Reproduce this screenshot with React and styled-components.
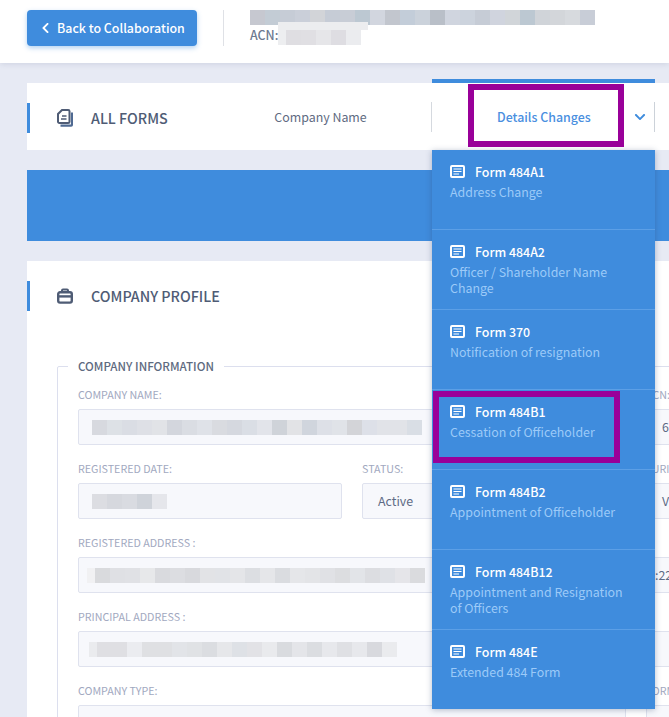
import React from 'react'
import styled, { createGlobalStyle } from 'styled-components'
import { FaChevronLeft, FaChevronDown } from 'react-icons/fa'

const GlobalStyle = createGlobalStyle`
  html, body { margin: 0; padding: 0; }
  body {
    background: #e7eaf4;
    font-family: "Noto Sans CJK SC", "Noto Sans", sans-serif;
  }
`

const blue = '#3f8cdd'

const Page = styled.div`
  width: 669px;
  height: 717px;
  overflow: hidden;
  background: #e7eaf4;
`
const Header = styled.header`
  height: 63px;
  background: #fff;
  box-shadow: 0 1px 6px rgba(90, 100, 140, 0.18);
  display: flex;
  align-items: flex-start;
  padding: 10px 0 0 27px;
  box-sizing: border-box;
  position: relative;
`
const BackButton = styled.button`
  width: 170px;
  height: 36px;
  border: 0;
  border-radius: 4px;
  background: ${blue};
  color: #fff;
  font: 500 12.4px/36px "Noto Sans CJK SC", sans-serif;
  white-space: nowrap;
  display: flex;
  align-items: center;
  gap: 7px;
  padding: 0 0 0 14px;
  box-shadow: 0 2px 5px rgba(63, 140, 221, 0.4);
  svg { width: 9px; height: 12px; flex: none; }
`
const HeaderDivider = styled.div`
  width: 1px;
  height: 36px;
  background: #dfe1e6;
  margin: 0 26px;
`
const CompanyBlock = styled.div`
  display: flex;
  flex-direction: column;
  gap: 1px;
`
const AcnRow = styled.div`
  display: flex;
  align-items: center;
  position: relative;
  height: 18px;
  font: 500 12.4px/18px "Noto Sans CJK SC", sans-serif;
  color: #6d7a90;
`
const AcnBlur = styled.div`
  position: absolute;
  left: 28px;
  top: -4px;
  width: 90px;
`
const Strip = styled.div`
  height: 8px;
  background: #ecedef;
`
const Mosaic = styled.div`
  display: flex;
  height: ${(p) => p.$height || 15}px;
`
const Cell = styled.div`
  width: ${(p) => p.$width || 15}px;
  flex: none;
  background: ${(p) => p.$color};
`

const Main = styled.main`
  padding: 20px 0 0 27px;
  display: flex;
  flex-direction: column;
  gap: 20px;
`
const TabsCard = styled.section`
  height: 67px;
  background: #fff;
  display: flex;
  align-items: center;
`
const SectionTitle = styled.h2`
  margin: 0;
  height: 30px;
  border-left: 3px solid ${blue};
  padding-left: 27px;
  display: flex;
  align-items: center;
  gap: 18px;
  font: 500 14.3px/30px "Noto Sans CJK SC", sans-serif;
  color: #4f5c75;
  flex: none;
  box-sizing: border-box;
  svg { width: 16px; height: 18px; flex: none; }
`
const TabsTitle = styled(SectionTitle)`
  width: 210px;
  align-self: flex-start;
  margin-top: 20px;
`
const CompanyTab = styled.div`
  width: 167px;
  height: 30px;
  padding-right: 27px;
  border-right: 1px solid #d5d9df;
  font: 400 12.4px/30px "Noto Sans CJK SC", sans-serif;
  color: #5f6b82;
  text-align: center;
  flex: none;
`
const DetailsTab = styled.div`
  position: relative;
  width: 223px;
  height: 67px;
  flex: none;
  display: flex;
  align-items: center;
  font: 500 12.4px/30px "Noto Sans CJK SC", sans-serif;
  color: #4a8fdf;
  padding-left: 65px;
  box-sizing: border-box;
  &::before {
    content: '';
    position: absolute;
    left: 0;
    right: 0;
    top: -4px;
    height: 4px;
    background: ${blue};
  }
  &::after {
    content: '';
    position: absolute;
    right: 0;
    top: 19px;
    height: 30px;
    width: 1px;
    background: #ccd2d9;
  }
`
const Chevron = styled.span`
  position: absolute;
  left: 202px;
  top: 28px;
  color: ${blue};
  display: flex;
  svg { width: 12px; height: 12px; }
`
const Dropdown = styled.div`
  position: absolute;
  left: 0;
  top: 67px;
  width: 223px;
  z-index: 5;
  background: ${blue};
  box-shadow: 0 1px 6px rgba(50, 70, 110, 0.35);
`
const DropItem = styled.div`
  height: 80px;
  box-sizing: border-box;
  padding: 14px 26px 0 18px;
  border-bottom: 1px solid #5c9fe6;
  &:last-child { border-bottom: 0; height: 79px; }
`
const ItemHead = styled.div`
  display: flex;
  align-items: center;
  gap: 10px;
  height: 16px;
  font: 500 12.4px/16px "Noto Sans CJK SC", sans-serif;
  color: #fff;
  svg { width: 15px; height: 13px; flex: none; margin-top: -2px; }
`
const ItemDesc = styled.div`
  margin-top: 4px;
  font: 400 12.4px/16px "Noto Sans CJK SC", sans-serif;
  color: #9ccaf8;
`
const Highlight = styled.div`
  position: absolute;
  z-index: 6;
  left: ${(p) => p.$left}px;
  top: ${(p) => p.$top}px;
  width: ${(p) => p.$width}px;
  height: ${(p) => p.$height}px;
  border: 6px solid #990099;
  box-sizing: border-box;
`
const Band = styled.div`
  height: 71px;
  background: ${blue};
`
const ProfileCard = styled.section`
  height: 460px;
  background: #fff;
  padding-top: 20px;
  overflow: hidden;
`
const Fieldset = styled.fieldset`
  margin: 47px 0 0 30px;
  padding: 14px 20px 0;
  width: 900px;
  border: 1px solid #dcdfee;
  border-radius: 2px;
  box-sizing: border-box;
`
const Legend = styled.legend`
  margin-left: -10px;
  padding: 0 10px;
  font: 500 11.6px/16px "Noto Sans CJK SC", sans-serif;
  color: #5e6a80;
`
const FieldGrid = styled.div`
  display: grid;
  grid-template-columns: repeat(3, 264px);
  column-gap: 20px;
  row-gap: 17px;
`
const Field = styled.div`
  grid-column: span ${(p) => p.$span || 1};
`
const Label = styled.label`
  display: block;
  height: 14px;
  margin-bottom: 7px;
  font: 400 10.7px/14px "Noto Sans CJK SC", sans-serif;
  color: #a1a8c0;
  white-space: nowrap;
`
const Input = styled.div`
  height: 36px;
  box-sizing: border-box;
  background: #f7f8fc;
  border: 1px solid #dfe2ee;
  border-radius: 2px;
  display: flex;
  align-items: center;
  padding-left: ${(p) => p.$pad || 15}px;
  font: 400 12.4px/34px "Noto Sans CJK SC", sans-serif;
  color: #5d6a85;
`

const DocsIcon = () => (
  <svg viewBox="0 0 16 18" fill="none">
    <path d="M3.5 16.6h10.2c.7 0 1.3-.6 1.3-1.3V3.4" stroke="#4f6a92" strokeWidth="2.2" />
    <path d="M5 1H11.2c.7 0 1.3.6 1.3 1.3v10.4c0 .7-.6 1.3-1.3 1.3H2.3C1.6 14 1 13.4 1 12.7V5z" stroke="#4f5c75" strokeWidth="2" fill="#fff" />
    <path d="M5 7h4.5M4 10h5.5" stroke="#4f5c75" strokeWidth="1.4" />
  </svg>
)

const CaseIcon = () => (
  <svg viewBox="0 0 16 16" fill="none">
    <path d="M5 4V2.6C5 2 5.5 1.5 6 1.5h4c.6 0 1 .5 1 1.1V4" stroke="#4f5c75" strokeWidth="2" />
    <rect x="1.2" y="4.2" width="13.6" height="10.4" rx="1.8" stroke="#4f5c75" strokeWidth="2.4" />
    <path d="M1 8.4h14" stroke="#4f5c75" strokeWidth="2.4" />
  </svg>
)

const CardIcon = () => (
  <svg viewBox="0 0 15 13" fill="none">
    <rect x="1" y="1" width="13" height="11" rx="1" stroke="#fff" strokeWidth="2" />
    <path d="M3.5 4h8M3.5 6.5h8M3.5 9h5.5" stroke="#fff" strokeWidth="1.2" />
  </svg>
)

const Blur = ({ colors, width }) => (
  <Mosaic>
    {colors.map((c, i) => (
      <Cell key={i} $color={c} $width={i === 0 ? width : 15} />
    ))}
  </Mosaic>
)

const titleBlur = ['#c6c8d0', '#c3ccd5', '#c6ccd6', '#cacfd9', '#d2d4d8', '#c6ccd6', '#c8cdd6', '#bcc8d2', '#d2d6df', '#c2c6ce', '#c3cdd9', '#cbd2db', '#b9bfc8', '#d0d5df', '#ccd3dd', '#c6ccd6', '#d0d4de', '#d1d5d9', '#bcc8d2', '#d0d4d9', '#d3d6da', '#d7dade', '#c8cdd7']
const acnBlur = ['#edeef0', '#dfdee2', '#e0dfe3', '#e6e6e9', '#dedde2', '#ebecef']
const nameBlur = ['#d7d9df', '#dde1e6', '#dadde4', '#dee0e6', '#e1e3e7', '#d3d6dd', '#dadde3', '#dfe2e8', '#d9dbe0', '#d5d8df', '#dadee5', '#e2e4ea', '#cfd3d9', '#e2e3e6', '#d0d5dd', '#dde0e7', '#e0e3e8', '#d3d4d8', '#dde0e8', '#e1e3e8', '#e1e3e8', '#d9dee5']
const dateBlur = ['#dcdde2', '#d6d8de', '#d9dbe1', '#cfd3da', '#e5e6eb']
const regBlur = ['#f1f1f3', '#d9dadd', '#dfe0e4', '#e0e1e5', '#e7e8ea', '#d9dade', '#dcdde1', '#d8d9dd', '#e2e3e6', '#e1e3e7', '#e4e5e8', '#dcdee2', '#e5e6e9', '#dadce0', '#e5e6e9', '#e3e4e7', '#e0e1e5', '#dcdde0', '#e2e4e8', '#dcdde1', '#dfe1e6', '#e5e5e9', '#dadbde']
const prinBlur = ['#eaebee', '#dfdfe3', '#dfdfe3', '#ebecf0', '#dfe0e3', '#dfe0e3', '#e2e4e8', '#e0e2e5', '#dbdde1', '#e6e7ea', '#dee1e6', '#e2e2e6', '#e9eaed', '#d9dbdf', '#e4e5e9', '#dbdde1', '#e7e8ec', '#dfe0e4', '#e7e8ec', '#d8d9de', '#eaebee']

const forms = [
  ['Form 484A1', 'Address Change'],
  ['Form 484A2', 'Officer / Shareholder Name Change'],
  ['Form 370', 'Notification of resignation'],
  ['Form 484B1', 'Cessation of Officeholder'],
  ['Form 484B2', 'Appointment of Officeholder'],
  ['Form 484B12', 'Appointment and Resignation of Officers'],
  ['Form 484E', 'Extended 484 Form'],
]

const App = () => {
  return (
    <Page>
      <GlobalStyle />
      <Header>
        <BackButton>
          <FaChevronLeft />
          Back to Collaboration
        </BackButton>
        <HeaderDivider />
        <CompanyBlock>
          <Mosaic>
            {titleBlur.map((c, i) => <Cell key={i} $color={c} />)}
          </Mosaic>
          <AcnRow>
            ACN:
            <AcnBlur>
              <Strip />
              <Blur colors={acnBlur} width={8} />
            </AcnBlur>
          </AcnRow>
        </CompanyBlock>
      </Header>
      <Main>
        <TabsCard>
          <TabsTitle>
            <DocsIcon />
            ALL FORMS
          </TabsTitle>
          <CompanyTab>Company Name</CompanyTab>
          <DetailsTab>
            Details Changes
            <Chevron><FaChevronDown /></Chevron>
            <Highlight $left={36} $top={1} $width={156} $height={63} />
            <Dropdown>
              {forms.map(([title, desc]) => (
                <DropItem key={title}>
                  <ItemHead><CardIcon />{title}</ItemHead>
                  <ItemDesc>{desc}</ItemDesc>
                </DropItem>
              ))}
            </Dropdown>
            <Highlight $left={1} $top={308} $width={187} $height={72} />
          </DetailsTab>
        </TabsCard>
        <Band />
        <ProfileCard>
          <SectionTitle>
            <CaseIcon />
            COMPANY PROFILE
          </SectionTitle>
          <Fieldset>
            <Legend>COMPANY INFORMATION</Legend>
            <FieldGrid>
              <Field $span={2}>
                <Label>COMPANY NAME:</Label>
                <Input $pad={13}><Blur colors={nameBlur} width={15} /></Input>
              </Field>
              <Field>
                <Label>ACN:</Label>
                <Input>6</Input>
              </Field>
              <Field>
                <Label>REGISTERED DATE:</Label>
                <Input $pad={13}><Blur colors={dateBlur} width={15} /></Input>
              </Field>
              <Field>
                <Label>STATUS:</Label>
                <Input>Active</Input>
              </Field>
              <Field>
                <Label>JURISDICTION:</Label>
                <Input>VIC</Input>
              </Field>
              <Field $span={2}>
                <Label>REGISTERED ADDRESS :</Label>
                <Input $pad={8}><Blur colors={regBlur} width={8} /></Input>
              </Field>
              <Field>
                <Label>&nbsp;</Label>
                <Input $pad={8}>:22</Input>
              </Field>
              <Field $span={2}>
                <Label>PRINCIPAL ADDRESS :</Label>
                <Input $pad={10}><Blur colors={prinBlur} width={8} /></Input>
              </Field>
              <Field>
                <Label>&nbsp;</Label>
                <Input />
              </Field>
              <Field $span={2}>
                <Label>COMPANY TYPE:</Label>
                <Input />
              </Field>
              <Field>
                <Label>FORM:</Label>
                <Input />
              </Field>
            </FieldGrid>
          </Fieldset>
        </ProfileCard>
      </Main>
    </Page>
  )
}

export default App
